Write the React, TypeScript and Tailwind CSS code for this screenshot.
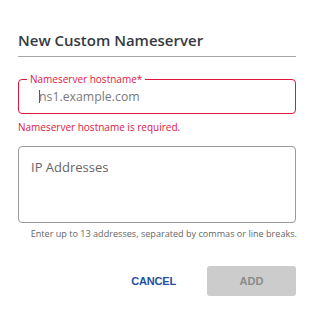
export default function App() {
  return (
    <div className="w-[313px] h-[309px] bg-white font-['Open_Sans',sans-serif] overflow-hidden">
      <div className="ml-[18px] w-[278px] pt-[30px]">
        {/* Header */}
        <div className="border-b border-[#a6a6a6] pb-[6px]">
          <h2 className="text-[15px] leading-[20px] font-semibold text-[#363a40]">New Custom Nameserver</h2>
        </div>

        {/* Hostname field */}
        <div className="relative mt-[22px] h-[35px] rounded-[4px] border border-[#e0163f] flex items-center pl-[20px]">
          <span className="absolute -top-[7px] left-[8px] bg-white px-[3px] text-[10px] leading-[12px] text-[#e0163f]">
            Nameserver hostname*
          </span>
          <span className="w-px h-[13px] bg-[#e0163f] -mr-[1px]" />
          <span className="text-[12.3px] leading-[18px] text-[#7a7a7a]">ns1.example.com</span>
        </div>
        <p className="mt-[6px] text-[10px] leading-[14px] text-[#e0163f]">Nameserver hostname is required.</p>

        {/* IP addresses */}
        <div className="mt-[12px] h-[77px] rounded-[4px] border border-[#9a9a9a] px-[12px] pt-[7px]">
          <span className="text-[13px] leading-[18px] text-[#666]">IP Addresses</span>
        </div>
        <p className="mt-[5px] text-right text-[9.1px] leading-[12px] text-[#666] whitespace-nowrap -mr-[1px]">
          Enter up to 13 addresses, separated by commas or line breaks.
        </p>

        {/* Actions */}
        <div className="mt-[26px] flex items-center justify-end gap-[31px] font-['Liberation_Sans',Arial,sans-serif] font-bold text-[11px]">
          <button className="text-[#2350a3] tracking-[-0.2px]">CANCEL</button>
          <button className="w-[89px] h-[30px] rounded-[3px] bg-[#cccccc] text-[#8a8a8a]">ADD</button>
        </div>
      </div>
    </div>
  );
}
